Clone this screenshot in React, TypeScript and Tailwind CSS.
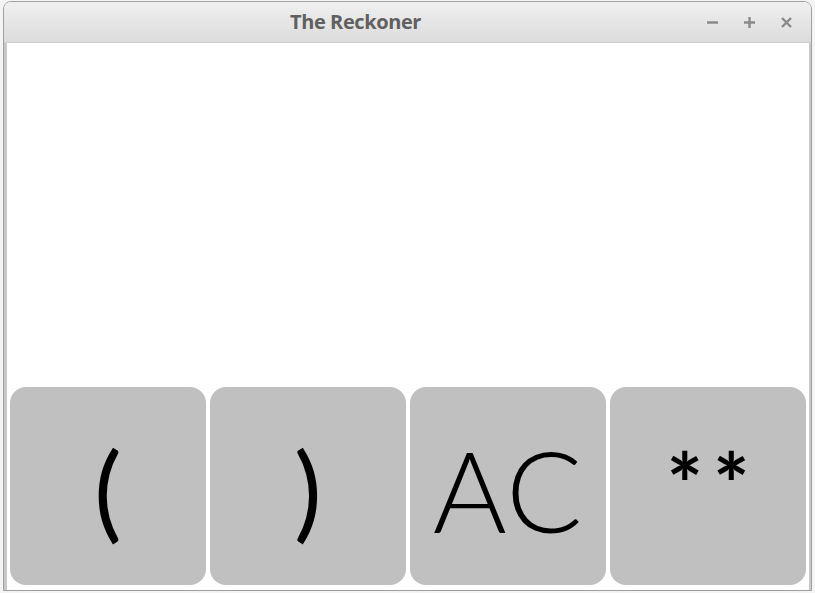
// App.tsx
const keys = [
  { label: '(', cls: 'pt-[45px] text-[104px] font-normal' },
  { label: ')', cls: 'pt-[45px] text-[104px] font-normal' },
  { label: 'AC', cls: 'pt-[40px] text-[113px] font-light tracking-[1px]' },
  { label: '**', cls: 'pt-[49px] pl-[10px] text-[86px] font-bold tracking-[10px]' },
];

function TitleControls() {
  return (
    <div className="absolute right-[18px] top-[14px] flex items-center gap-[24px] text-[#8a8a8a]">
      <svg width="13" height="13" viewBox="0 0 13 13">
        <path d="M1 6.5h11" stroke="currentColor" strokeWidth="2.4" />
      </svg>
      <svg width="13" height="13" viewBox="0 0 13 13">
        <path d="M1 6.5h11M6.5 1v11" stroke="currentColor" strokeWidth="2.4" />
      </svg>
      <svg width="13" height="13" viewBox="0 0 13 13">
        <path d="M2 2l9 9M11 2l-9 9" stroke="currentColor" strokeWidth="2.4" />
      </svg>
    </div>
  );
}

export default function App() {
  return (
    <div className="w-[815px] h-[593px] bg-[#f4f4f4] pl-[3px] pr-[3px] pt-[1px] pb-[2px]">
      <div className="flex flex-col h-full rounded-t-[8px] border border-[#a0a0a0] overflow-hidden bg-white">
        <div className="relative h-[41px] shrink-0 bg-gradient-to-b from-[#f0f0f0] to-[#dcdcdc] border-b border-[#d0d0d0] flex items-center justify-center pr-[104px]">
          <span className="text-[20px] font-bold text-[#606060] tracking-[-0.4px]" style={{ fontFamily: '"Open Sans", "DejaVu Sans", sans-serif' }}>
            The Reckoner
          </span>
          <TitleControls />
        </div>
        <div className="flex-1 flex flex-col justify-end border-l-[3px] border-r-[2px] border-[#c8c8c8] border-t-0 border-b-0 bg-white">
          <div className="grid grid-cols-4 gap-[4px] pl-[3px] pr-[3px] pb-[5px] h-[203px]">
            {keys.map((k) => (
              <div
                key={k.label}
                className={`rounded-[16px] bg-[#c0c0c0] flex justify-center text-black leading-[1.1] ${k.cls}`}
                style={{ fontFamily: 'Lato, "Liberation Sans", sans-serif' }}
              >
                {k.label}
              </div>
            ))}
          </div>
        </div>
      </div>
    </div>
  );
}
